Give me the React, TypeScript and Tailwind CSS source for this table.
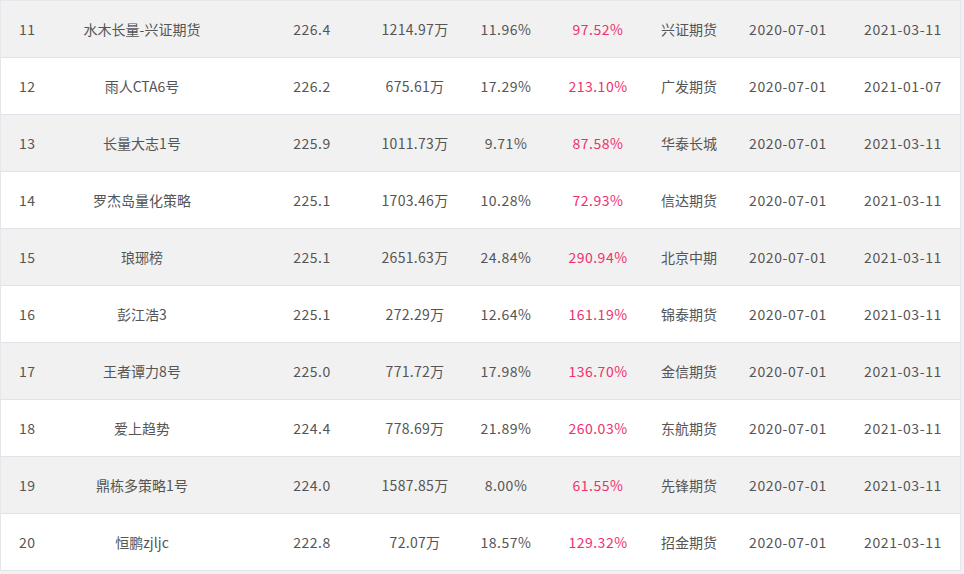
type Row = {
  rank: number;
  name: string;
  score: string;
  size: string;
  vol: string;
  ret: string;
  company: string;
  start: string;
  end: string;
};

const ROWS: Row[] = [
  { rank: 11, name: '水木长量-兴证期货', score: '226.4', size: '1214.97万', vol: '11.96%', ret: '97.52%', company: '兴证期货', start: '2020-07-01', end: '2021-03-11' },
  { rank: 12, name: '雨人CTA6号', score: '226.2', size: '675.61万', vol: '17.29%', ret: '213.10%', company: '广发期货', start: '2020-07-01', end: '2021-01-07' },
  { rank: 13, name: '长量大志1号', score: '225.9', size: '1011.73万', vol: '9.71%', ret: '87.58%', company: '华泰长城', start: '2020-07-01', end: '2021-03-11' },
  { rank: 14, name: '罗杰岛量化策略', score: '225.1', size: '1703.46万', vol: '10.28%', ret: '72.93%', company: '信达期货', start: '2020-07-01', end: '2021-03-11' },
  { rank: 15, name: '琅琊榜', score: '225.1', size: '2651.63万', vol: '24.84%', ret: '290.94%', company: '北京中期', start: '2020-07-01', end: '2021-03-11' },
  { rank: 16, name: '彭江浩3', score: '225.1', size: '272.29万', vol: '12.64%', ret: '161.19%', company: '锦泰期货', start: '2020-07-01', end: '2021-03-11' },
  { rank: 17, name: '王者谭力8号', score: '225.0', size: '771.72万', vol: '17.98%', ret: '136.70%', company: '金信期货', start: '2020-07-01', end: '2021-03-11' },
  { rank: 18, name: '爱上趋势', score: '224.4', size: '778.69万', vol: '21.89%', ret: '260.03%', company: '东航期货', start: '2020-07-01', end: '2021-03-11' },
  { rank: 19, name: '鼎栋多策略1号', score: '224.0', size: '1587.85万', vol: '8.00%', ret: '61.55%', company: '先锋期货', start: '2020-07-01', end: '2021-03-11' },
  { rank: 20, name: '恒鹏zjljc', score: '222.8', size: '72.07万', vol: '18.57%', ret: '129.32%', company: '招金期货', start: '2020-07-01', end: '2021-03-11' },
];

export default function App() {
  return (
    <div
      className="min-h-[574px] w-[964px] bg-[#f1f1f1] text-[14px] text-[#555]"
      style={{ fontFamily: '"Microsoft YaHei", "Noto Sans CJK SC", sans-serif' }}
    >
      <div className="w-[961px] border-l border-r border-t border-[#e6e6ec] bg-white">
        {ROWS.map((r, idx) => (
          <div
            key={r.rank}
            className={`grid h-[57px] grid-cols-[25px_232px_108px_98px_84px_100px_82px_116px_114px] items-center whitespace-nowrap border-b border-[#e2e2ea] ${
              idx % 2 === 0 ? 'bg-[#f1f1f1]' : 'bg-white'
            }`}
          >
            <div className="pl-[18px] tracking-[0.5px]">{r.rank}</div>
            <div className="text-center">{r.name}</div>
            <div className="text-center tracking-[0.5px]">{r.score}</div>
            <div className="text-center tracking-[0.3px]">{r.size}</div>
            <div className="text-center tracking-[0.5px]">{r.vol}</div>
            <div className="text-center tracking-[0.5px] text-[#f0306e]">{r.ret}</div>
            <div className="text-center">{r.company}</div>
            <div className="text-center tracking-[0.6px]">{r.start}</div>
            <div className="text-center tracking-[0.6px]">{r.end}</div>
          </div>
        ))}
      </div>
    </div>
  );
}
